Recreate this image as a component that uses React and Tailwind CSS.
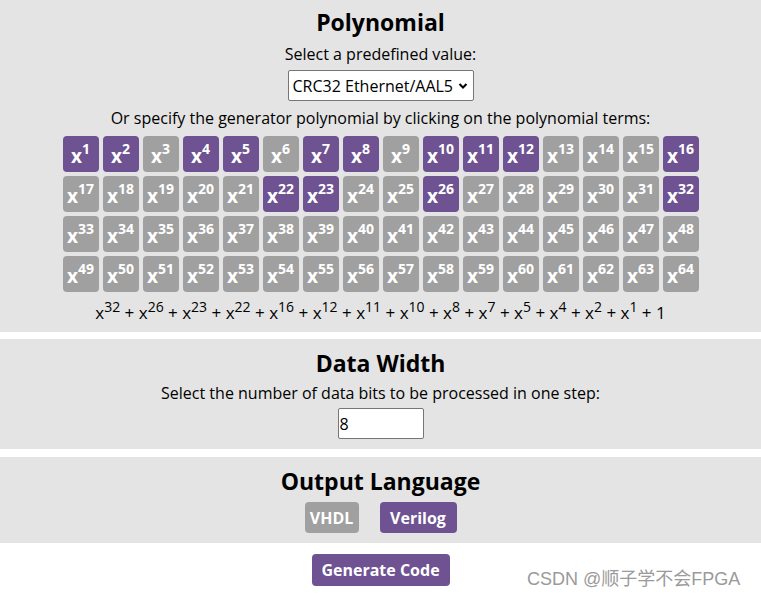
import React, { useState } from 'react';

const FONT = { fontFamily: '"Open Sans", "Noto Sans", sans-serif' };

const initial = [1, 2, 4, 5, 7, 8, 10, 11, 12, 16, 22, 23, 26, 32];

const Term = ({ n, on, onToggle }) => (
  <button
    onClick={onToggle}
    className={`w-9 h-9 rounded-[4px] text-white font-bold flex items-center justify-center ${
      on ? 'bg-[#6e5292]' : 'bg-[#a0a0a0]'
    }`}
  >
    <span className="text-[19px] leading-none mt-[5px]">x</span>
    <span className="text-[14px] leading-none -mt-[10px]">{n}</span>
  </button>
);

export default function App() {
  const [terms, setTerms] = useState(initial);
  const [lang, setLang] = useState('verilog');

  const toggle = (n) =>
    setTerms((t) => (t.includes(n) ? t.filter((x) => x !== n) : [...t, n]));

  const sorted = [...terms].sort((a, b) => b - a);

  return (
    <div className="relative min-h-[598px] bg-white text-black text-center" style={FONT}>
      <section className="bg-[#e4e4e4] pt-[6px] h-[332px]">
        <h2 className="text-[23px] font-bold leading-8">Polynomial</h2>
        <p className="mt-[4px] text-[16px] leading-6">Select a predefined value:</p>
        <div className="mt-[4px] flex justify-center">
          <div className="relative w-[186px] h-[31px] bg-white border border-[#767676] rounded-[2px] flex items-center pl-[4px] text-[16px]">
            CRC32 Ethernet/AAL5
            <svg className="absolute right-[5px] top-[11px]" width="10" height="8" viewBox="0 0 10 8">
              <path d="M1.5 2 L5 5.5 L8.5 2" fill="none" stroke="#000" strokeWidth="2" />
            </svg>
          </div>
        </div>
        <p className="mt-[5px] text-[16px] leading-6">
          Or specify the generator polynomial by clicking on the polynomial terms:
        </p>
        <div className="mt-[6px] mx-auto w-fit grid grid-cols-16 gap-1">
          {Array.from({ length: 64 }, (_, i) => i + 1).map((n) => (
            <Term key={n} n={n} on={terms.includes(n)} onToggle={() => toggle(n)} />
          ))}
        </div>
        <p className="mt-[9px] text-[17px] leading-6">
          {sorted.map((n) => (
            <span key={n}>
              x<sup className="text-[14px]">{n}</sup> +{' '}
            </span>
          ))}
          1
        </p>
      </section>

      <section className="mt-[7px] bg-[#e4e4e4] h-[110px] pt-[8px]">
        <h2 className="text-[23px] font-bold leading-8">Data Width</h2>
        <p className="mt-[2px] text-[16px] leading-6">
          Select the number of data bits to be processed in one step:
        </p>
        <div className="mt-[3px] flex justify-center">
          <input
            defaultValue="8"
            className="w-[86px] h-[31px] bg-white border border-[#767676] rounded-[2px] text-[16px] px-[1px] outline-none"
          />
        </div>
      </section>

      <section className="mt-[8px] bg-[#e4e4e4] h-[86px] pt-[8px]">
        <h2 className="text-[23px] font-bold leading-8">Output Language</h2>
        <div className="mt-[5px] flex justify-center gap-[21px]">
          <button
            onClick={() => setLang('vhdl')}
            className={`h-[31px] w-[54px] rounded-[4px] text-white font-bold text-[16px] ${
              lang === 'vhdl' ? 'bg-[#6e5292]' : 'bg-[#a0a0a0]'
            }`}
          >
            VHDL
          </button>
          <button
            onClick={() => setLang('verilog')}
            className={`h-[31px] w-[77px] rounded-[4px] text-white font-bold text-[16px] ${
              lang === 'verilog' ? 'bg-[#6e5292]' : 'bg-[#a0a0a0]'
            }`}
          >
            Verilog
          </button>
        </div>
      </section>

      <div className="mt-[11px] flex justify-center">
        <button className="h-[32px] w-[138px] rounded-[4px] bg-[#6e5292] text-white font-bold text-[16px]">
          Generate Code
        </button>
      </div>

      <span
        className="absolute left-[527px] top-[566px] text-[18px] text-[#9a9a9a]"
        style={{ fontFamily: '"Liberation Sans", "Noto Sans CJK SC", sans-serif' }}
      >
        CSDN @顺子学不会FPGA
      </span>
    </div>
  );
}
